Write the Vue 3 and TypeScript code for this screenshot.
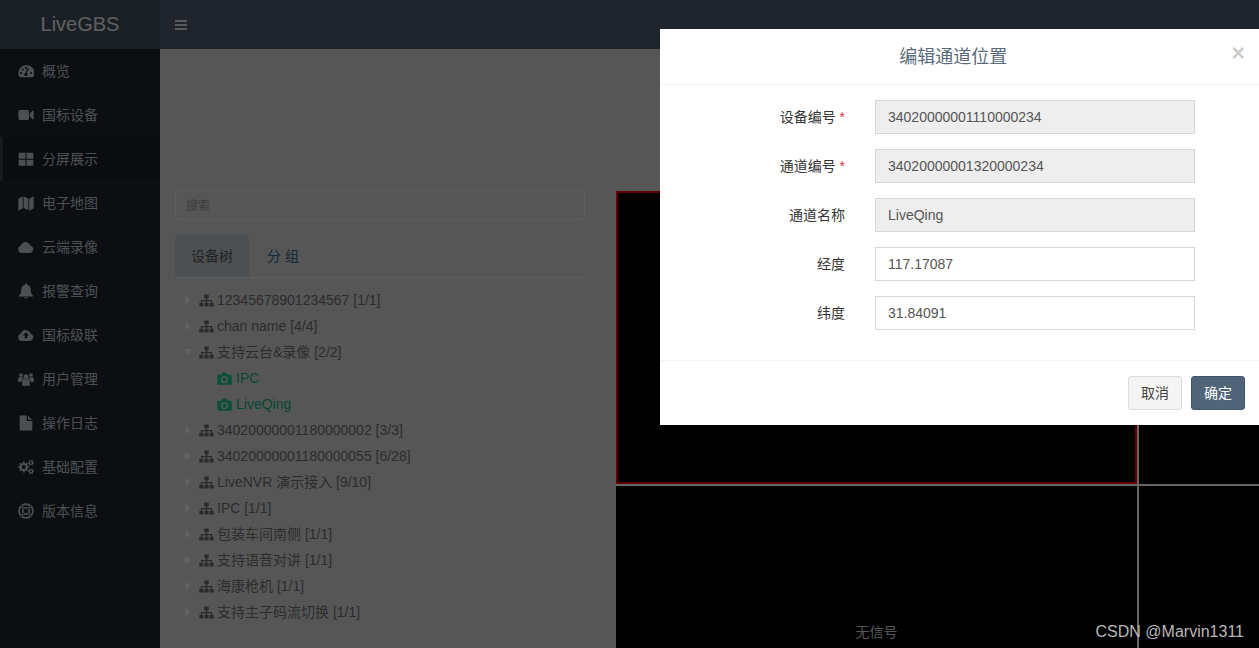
<script setup lang="ts">
interface TreeRow {
  label: string;
  open?: boolean;
  leaf?: boolean;
}

// tooth outline for the cogs icon
function gear(cx: number, cy: number, r: number, hole: number, teeth: number): string {
  const pts: string[] = [];
  const step = (Math.PI * 2) / teeth;
  for (let i = 0; i < teeth; i++) {
    const a = i * step;
    const list: [number, number][] = [
      [a - step * 0.32, r * 0.76],
      [a - step * 0.18, r],
      [a + step * 0.18, r],
      [a + step * 0.32, r * 0.76],
    ];
    for (const [t, d] of list) {
      pts.push(`${(cx + Math.cos(t) * d).toFixed(2)} ${(cy + Math.sin(t) * d).toFixed(2)}`);
    }
  }
  return `M${pts.join("L")}z` + circle(cx, cy, hole);
}

function circle(cx: number, cy: number, r: number): string {
  return `M${cx - r} ${cy}a${r} ${r} 0 1 0 ${r * 2} 0a${r} ${r} 0 1 0 ${-r * 2} 0z`;
}

const icons: Record<string, string> = {
  dashboard:
    "M12 3.500A11.500 11.500 0 0 0 .5 15c0 2.200.5 4 1.500 5.700.2.3.5.5.9.5h19.200c.4 0 .7-.2.9-.5 1-1.700 1.500-3.500 1.500-5.700A11.500 11.500 0 0 0 12 3.500z" +
    circle(4.500, 15, 1.600) + circle(7, 9.800, 1.600) + circle(12, 7.500, 1.600) + circle(19.500, 15, 1.600) +
    "M15.800 9.200l-2.600 6.100a2.400 2.400 0 1 1-1.900-.4l2.700-6.400a1 1 0 1 1 1.800.7z",
  video:
    "M.5 7A2.500 2.500 0 0 1 3 4.500h11A2.500 2.500 0 0 1 16.500 7v10a2.500 2.500 0 0 1-2.500 2.500H3A2.500 2.500 0 0 1 .5 17zM17.500 10l5-4.700c.5-.4 1-.2 1 .4v12.600c0 .6-.5.8-1 .4l-5-4.700z",
  grid: "M1 2.500h10.200v9H1zM12.800 2.500H23v9H12.800zM1 13h10.200v9H1zM12.800 13H23v9H12.800z",
  map: "M.5 5.500L7.200 2v18L.5 23.500zM8.500 2l7 3.500v17.500l-7-3.500zM16.800 5.500L23.500 2v18l-6.700 3.500z",
  cloud:
    "M6 21a5.800 5.800 0 0 1-1.700-11.300 6.800 6.800 0 0 1 10.700-3.700 7 7 0 0 1 3.900 3.800A5.800 5.800 0 0 1 18 21z",
  bell:
    "M12 .8a1.700 1.700 0 0 0-1.600 2A7.200 7.200 0 0 0 4.800 10c0 5.500-1.600 7.200-3.600 9v1.300h21.600V19c-2-1.800-3.600-3.500-3.600-9a7.200 7.200 0 0 0-5.600-7.200A1.700 1.700 0 0 0 12 .8zM9.200 21.200a2.900 2.900 0 0 0 5.600 0z",
  upload:
    "M6 21a5.800 5.800 0 0 1-1.700-11.300 6.800 6.800 0 0 1 10.700-3.700 7 7 0 0 1 3.900 3.800A5.800 5.800 0 0 1 18 21zM12 8l-4.800 4.800h3V17h3.600v-4.200h3z",
  users:
    circle(12, 8.500, 3.800) + circle(4.500, 6, 2.800) + circle(19.500, 6, 2.800) +
    "M6.300 15c0-1.800 1.300-3.200 2.900-3.200h5.600c1.600 0 2.900 1.400 2.900 3.200v7H6.300zM.3 11.500c0-1.200.8-2.200 1.800-2.200h4.500a5 5 0 0 0 1 2.400A4.600 4.600 0 0 0 5 15.500v1H.3zM23.700 11.500c0-1.200-.8-2.200-1.800-2.200h-4.500a5 5 0 0 1-1 2.400 4.600 4.600 0 0 1 2.600 3.800v1h4.700z",
  file: "M2.500 .8H13V9h8.500v14.200h-19zM15 1.200l6.200 6H15z",
  cogs: gear(8.500, 12, 8.200, 3, 8) + gear(19.500, 5.500, 4.400, 1.600, 6) + gear(19.500, 18.500, 4.400, 1.600, 6),
  ring:
    circle(12, 12, 11.800) + circle(12, 12, 9) + circle(12, 12, 6) + circle(12, 12, 3.600) +
    "M5.700 3.800L9.800 7.600 7.600 9.800 3.800 5.700zM18.300 3.800L14.200 7.600l2.200 2.200 3.800-4.100zM5.700 20.200L9.800 16.400l-2.200-2.200-3.800 4.100zM18.300 20.200L14.200 16.400l2.200-2.200 3.800 4.100z",
  sitemap:
    "M8.500 2.500h7V8h-2.300v3H19.800c.7 0 1.200.5 1.200 1.200V16h2.500v5.500H17V16h2v-3h-5.800v3h2.300v5.500h-7V16h2.300v-3H5v3h2v5.500H.5V16H3v-3.800c0-.7.5-1.200 1.200-1.200h6.600V8H8.500z",
  camera:
    "M2.500 6H7L8.500 2.500h7L17 6h4.500a2 2 0 0 1 2 2v12a2 2 0 0 1-2 2h-19a2 2 0 0 1-2-2V8a2 2 0 0 1 2-2z" +
    circle(12, 13.800, 5.800) + circle(12, 13.800, 3.200),
};

const navItems = [
  { icon: "dashboard", label: "概览" },
  { icon: "video", label: "国标设备" },
  { icon: "grid", label: "分屏展示", active: true },
  { icon: "map", label: "电子地图" },
  { icon: "cloud", label: "云端录像" },
  { icon: "bell", label: "报警查询" },
  { icon: "upload", label: "国标级联" },
  { icon: "users", label: "用户管理" },
  { icon: "file", label: "操作日志" },
  { icon: "cogs", label: "基础配置" },
  { icon: "ring", label: "版本信息" },
];

const tree: TreeRow[] = [
  { label: "12345678901234567 [1/1]" },
  { label: "chan name [4/4]" },
  { label: "支持云台&录像 [2/2]", open: true },
  { label: "IPC", leaf: true },
  { label: "LiveQing", leaf: true },
  { label: "34020000001180000002 [3/3]" },
  { label: "34020000001180000055 [6/28]" },
  { label: "LiveNVR 演示接入 [9/10]" },
  { label: "IPC [1/1]" },
  { label: "包装车间南侧 [1/1]" },
  { label: "支持语音对讲 [1/1]" },
  { label: "海康枪机 [1/1]" },
  { label: "支持主子码流切换 [1/1]" },
];

const fields = [
  { label: "设备编号", value: "34020000001110000234", required: true, disabled: true },
  { label: "通道编号", value: "34020000001320000234", required: true, disabled: true },
  { label: "通道名称", value: "LiveQing", disabled: true },
  { label: "经度", value: "117.17087" },
  { label: "纬度", value: "31.84091" },
];
</script>

<template>
  <div class="page">
    <header class="topbar">
      <div class="logo">LiveGBS</div>
      <div class="toggle">
        <svg class="bars" viewBox="0 0 12 12" aria-hidden="true">
          <path d="M0 1h12v2H0zM0 5h12v2H0zM0 9h12v2H0z" />
        </svg>
      </div>
    </header>
    <div class="main">
      <aside class="sidebar">
        <div v-for="item in navItems" :key="item.label" class="nav-item" :class="{ active: item.active }">
          <svg class="nav-icon" viewBox="0 0 24 24" aria-hidden="true">
            <path :d="icons[item.icon]" fill-rule="evenodd" />
          </svg>
          <span>{{ item.label }}</span>
        </div>
      </aside>
      <section class="content">
        <div class="left-panel">
          <input class="search" type="text" placeholder="搜索" />
          <div class="tabs">
            <div class="tab current">设备树</div>
            <div class="tab">分 组</div>
          </div>
          <ul class="tree">
            <li v-for="row in tree" :key="row.label" class="tree-row" :class="{ leaf: row.leaf }">
              <template v-if="row.leaf">
                <svg class="cam" viewBox="0 0 24 24" aria-hidden="true">
                  <path :d="icons.camera" fill-rule="evenodd" />
                </svg>
                <span>{{ row.label }}</span>
              </template>
              <template v-else>
                <i class="caret" :class="{ open: row.open }"></i>
                <svg class="org" viewBox="0 0 24 24" aria-hidden="true">
                  <path :d="icons.sitemap" />
                </svg>
                <span>{{ row.label }}</span>
              </template>
            </li>
          </ul>
        </div>
        <div class="videos">
          <div class="cell selected"></div>
          <div class="cell"></div>
          <div class="cell"><span class="no-signal">无信号</span></div>
          <div class="cell"></div>
        </div>
      </section>
    </div>

    <div class="backdrop"></div>

    <div class="modal">
      <div class="modal-head">
        <h4>编辑通道位置</h4>
        <span class="close">×</span>
      </div>
      <div class="modal-body">
        <div v-for="f in fields" :key="f.label" class="form-row">
          <label>{{ f.label }}<em v-if="f.required"> *</em></label>
          <input type="text" :value="f.value" :disabled="f.disabled" />
        </div>
      </div>
      <div class="modal-foot">
        <button type="button" class="btn">取消</button>
        <button type="button" class="btn primary">确定</button>
      </div>
    </div>

    <div class="watermark">CSDN @Marvin1311</div>
  </div>
</template>

<style>
html,
body {
  margin: 0;
  height: 100%;
  overflow: hidden;
}
</style>

<style scoped>
.page {
  position: relative;
  display: flex;
  flex-direction: column;
  height: 648px;
  overflow: hidden;
  font-family: "Liberation Sans", "Noto Sans CJK SC", sans-serif;
  font-size: 14px;
  line-height: 20px;
  color: #333;
  background: #d6d7da;
}

.topbar {
  display: flex;
  flex: none;
  height: 49px;
  background: #4e5a70;
}

.logo {
  width: 160px;
  line-height: 49px;
  text-align: center;
  font-size: 20px;
  color: #eee;
  background: #414e5d;
}

.toggle {
  display: flex;
  align-items: center;
  padding-left: 15px;
}

.bars {
  width: 12px;
  height: 12px;
  fill: #e0e0e0;
}

.main {
  display: flex;
  flex: 1;
  min-height: 0;
}

.sidebar {
  flex: none;
  width: 160px;
  background: #1f242c;
}

.nav-item {
  display: flex;
  align-items: center;
  height: 44px;
  padding-left: 18px;
  color: #b8c7ce;
  border-left: 0 solid #373f4f;
}

.nav-item.active {
  padding-left: 15px;
  border-left-width: 3px;
  background: #1b2028;
}

.nav-icon {
  flex: none;
  width: 16px;
  height: 16px;
  margin-right: 8px;
  fill: #b8c7ce;
}

.content {
  display: flex;
  flex: 1;
  gap: 31px;
  min-width: 0;
  padding: 141px 0 0 15px;
  background: #d6d7da;
}

.left-panel {
  flex: none;
  width: 410px;
}

.search {
  display: block;
  box-sizing: border-box;
  width: 100%;
  height: 30px;
  padding: 1px 10px 0;
  border: 1px solid #eaeaea;
  border-radius: 3px;
  font: inherit;
  font-size: 12px;
  background: #d6d7da;
}

.search::placeholder {
  color: #999;
}

.tabs {
  display: flex;
  height: 42px;
  margin-top: 15px;
  border-bottom: 1px solid #eaeaea;
}

.tab {
  padding: 0 18px;
  line-height: 42px;
  color: #2f6a90;
}

.tab.current {
  padding: 0 16px;
  color: #555;
  background: #c0c9d0;
  border-radius: 3px 3px 0 0;
}

.tree {
  margin: 9px 0 0;
  padding: 0;
  list-style: none;
}

.tree-row {
  display: flex;
  align-items: center;
  height: 26px;
  color: #707070;
}

.tree-row.leaf {
  padding-left: 42px;
  color: #12b57a;
}

.caret {
  flex: none;
  width: 0;
  height: 0;
  margin: 0 8px 0 10px;
  border-style: solid;
  border-width: 4px 0 4px 6px;
  border-color: transparent transparent transparent #f2f2f2;
}

.caret.open {
  margin: 0 7px 0 9px;
  border-width: 6px 4px 0;
  border-color: #f2f2f2 transparent transparent;
}

.org {
  flex: none;
  width: 15px;
  height: 15px;
  margin-right: 3px;
  fill: #6b6b6b;
}

.cam {
  flex: none;
  width: 15px;
  height: 15px;
  margin-right: 4px;
  fill: #15c98c;
}

.videos {
  display: grid;
  flex: 1;
  grid-template-columns: 521px 1fr;
  grid-template-rows: 293px 1fr;
  gap: 2px;
  min-width: 0;
  margin-top: 1px;
  background: #fff;
}

.cell {
  position: relative;
  box-sizing: border-box;
  background: #000;
}

.cell.selected {
  border: 2px solid #f00;
}

.no-signal {
  position: absolute;
  top: 136px;
  left: 0;
  right: 0;
  text-align: center;
  color: #d8d8d8;
}

.backdrop {
  position: absolute;
  inset: 0;
  background: rgba(0, 0, 0, 0.6);
}

.modal {
  position: absolute;
  top: 29px;
  left: 660px;
  width: 600px;
  background: #fff;
}

.modal-head {
  display: flex;
  align-items: flex-start;
  box-sizing: border-box;
  height: 56px;
  padding: 15px;
  border-bottom: 1px solid #f4f4f4;
}

.modal-head h4 {
  flex: 1;
  margin: 0;
  font-size: 18px;
  font-weight: 400;
  line-height: 27px;
  text-align: center;
  color: #5a6a7d;
}

.close {
  font-size: 23px;
  font-weight: 700;
  line-height: 19px;
  color: #000;
  opacity: 0.2;
}

.modal-body {
  padding: 15px 0 15px;
}

.form-row {
  display: flex;
  align-items: center;
  margin-bottom: 15px;
}

.form-row label {
  box-sizing: border-box;
  width: 185px;
  text-align: right;
  color: #333;
}

.form-row em {
  font-style: normal;
  color: #e33;
}

.form-row input {
  box-sizing: border-box;
  width: 320px;
  height: 34px;
  margin-left: 30px;
  padding: 6px 12px;
  border: 1px solid #d2d6de;
  font: inherit;
  color: #555;
  background: #fff;
}

.form-row input:disabled {
  background: #eee;
  opacity: 1;
}

.modal-foot {
  display: flex;
  justify-content: flex-end;
  gap: 9px;
  padding: 15px;
  border-top: 1px solid #f4f4f4;
}

.btn {
  width: 54px;
  height: 34px;
  padding: 0;
  border: 1px solid #ddd;
  border-radius: 3px;
  font: inherit;
  color: #444;
  background: #f4f4f4;
}

.btn.primary {
  border-color: #455566;
  color: #fff;
  background: #50647a;
}

.watermark {
  position: absolute;
  right: 15px;
  bottom: 6px;
  font-size: 16px;
  color: #b9b9b9;
}
</style>
